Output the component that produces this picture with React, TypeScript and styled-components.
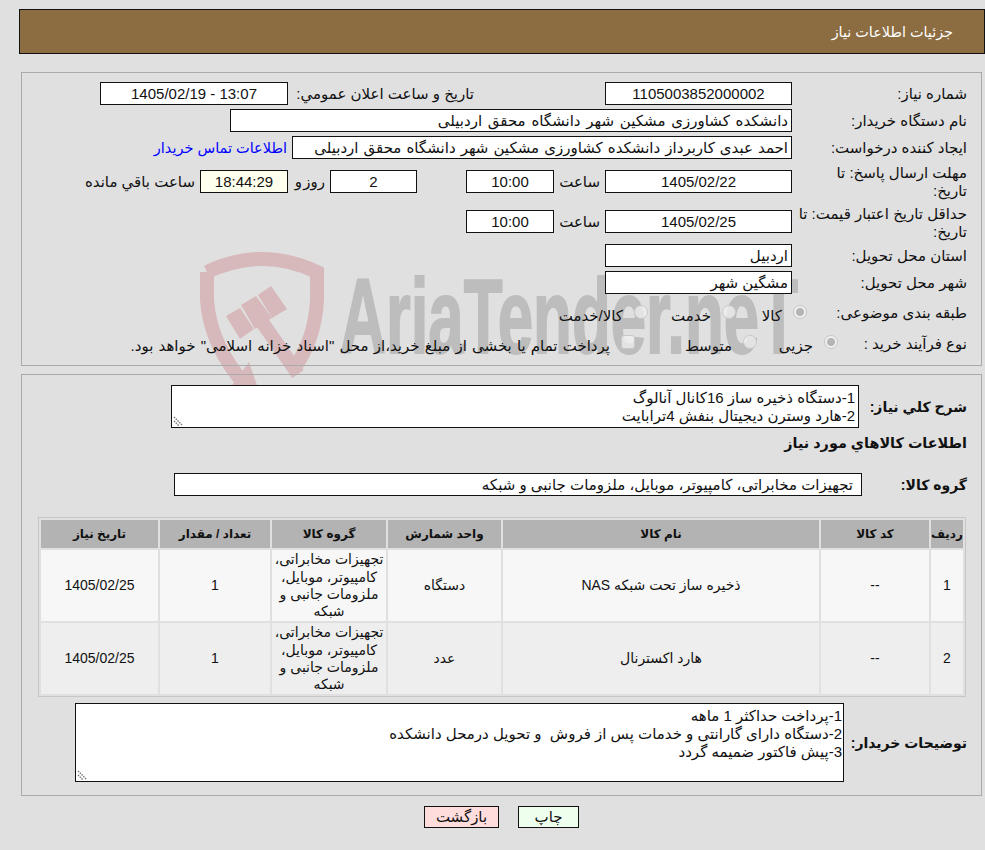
import React from 'react'
import styled, { createGlobalStyle } from 'styled-components'

const Global = createGlobalStyle`
  html, body {
    margin: 0;
    background: #e0e0e0;
  }
  * {
    box-sizing: border-box;
  }
`

const Page = styled.div`
  position: relative;
  isolation: isolate;
  width: 985px;
  height: 850px;
  overflow: hidden;
  padding-top: 9px;
  direction: rtl;
  color: #111;
  font-family: "Liberation Sans", "DejaVu Sans", sans-serif;
  font-size: 15px;
`

const Watermark = styled.svg`
  position: absolute;
  top: 0;
  left: 0;
  z-index: -1;
`

const Header = styled.div`
  height: 45px;
  margin-left: 19px;
  padding-right: 31px;
  display: flex;
  align-items: center;
  background: #8c6c41;
  border: 1px solid #111;
  color: #fff;
  font-size: 14.4px;
`

const Panel = styled.div<{ $top: number; $h: number; $pad: number }>`
  width: 961px;
  height: ${p => p.$h}px;
  margin: ${p => p.$top}px 3px 0 0;
  padding-top: ${p => p.$pad}px;
  padding-right: 14px;
  border: 1px solid #aaa;
`

const Row = styled.div<{ $top?: number; $h?: number; $center?: boolean }>`
  display: flex;
  align-items: ${p => (p.$center ? 'center' : 'flex-start')};
  height: ${p => p.$h ?? 23}px;
  margin-top: ${p => p.$top ?? 4}px;
`

const Label = styled.div<{ $w: number; $top?: number }>`
  flex: none;
  width: ${p => p.$w}px;
  margin-top: ${p => p.$top ?? 3}px;
  line-height: 18px;
`

const BoldLabel = styled.div<{ $w: number }>`
  flex: none;
  width: ${p => p.$w}px;
  font-size: 14px;
  font-weight: 700;
  line-height: 18px;
  white-space: nowrap;
`

const Field = styled.div<{ $w: number; $center?: boolean; $bg?: string; $word?: number; $pad?: number }>`
  flex: none;
  width: ${p => p.$w}px;
  height: 23px;
  padding: 0 ${p => p.$pad ?? 3}px 0 3px;
  background: ${p => p.$bg ?? '#fff'};
  border: 1px solid #111;
  line-height: 21px;
  text-align: ${p => (p.$center ? 'center' : 'right')};
  word-spacing: ${p => p.$word ?? 0}px;
  white-space: nowrap;
  overflow: hidden;
`

const Text = styled.span<{ $w?: number; $right?: number; $word?: number }>`
  flex: none;
  width: ${p => (p.$w ? `${p.$w}px` : 'auto')};
  margin-right: ${p => p.$right ?? 0}px;
  line-height: 23px;
  word-spacing: ${p => p.$word ?? 0}px;
  white-space: nowrap;
`

const ContactLink = styled.a`
  margin-right: 5px;
  color: #00f;
  font-size: 14.5px;
  line-height: 25px;
  text-decoration: none;
  white-space: nowrap;
`

const RadioItem = styled.div<{ $w: number }>`
  flex: none;
  display: flex;
  align-items: center;
  gap: 11px;
  width: ${p => p.$w}px;
`

const OptionText = styled.span<{ $word?: number }>`
  padding-top: 7px;
  word-spacing: ${p => p.$word ?? 0}px;
  white-space: nowrap;
`

const Radio = styled.span<{ $on?: boolean; $square?: boolean }>`
  flex: none;
  width: 14px;
  height: 14px;
  border-radius: ${p => (p.$square ? '3px' : '50%')};
  border: 1px solid #c8c8c8;
  background: ${p => (p.$on
    ? 'radial-gradient(circle, #b4b4b4 0 3.5px, #efefef 4.5px)'
    : 'rgba(240, 240, 240, 0.75)')};
`

const Box = styled.div<{ $w: number; $h: number; $pad: number }>`
  position: relative;
  flex: none;
  width: ${p => p.$w}px;
  height: ${p => p.$h}px;
  padding: 3px ${p => p.$pad}px 0 0;
  background: #fff;
  border: 1px solid #111;
  line-height: 18px;
  white-space: pre-wrap;
  overflow: hidden;
`

const Grip = styled.svg`
  position: absolute;
  left: 1px;
  bottom: 1px;
`

const Title = styled.div`
  margin-top: 5px;
  height: 20px;
  font-size: 14.4px;
  font-weight: 700;
  line-height: 20px;
`

const Table = styled.table`
  width: 928px;
  margin: 21px 1px 0 0;
  table-layout: fixed;
  border-collapse: separate;
  border-spacing: 2px;
  border: 1px solid #c6c6c6;
`

const Th = styled.th<{ $w: number }>`
  width: ${p => p.$w}px;
  height: 28px;
  padding: 0;
  background: #b3b3b3;
  font-size: 12px;
  font-weight: 700;
`

const Td = styled.td<{ $alt?: boolean }>`
  height: 71px;
  padding: 1px 0 0;
  background: ${p => (p.$alt ? '#eeeeee' : '#f7f7f7')};
  font-size: 14px;
  line-height: 17.3px;
  text-align: center;
`

const Buttons = styled.div`
  display: flex;
  justify-content: center;
  gap: 19px;
  margin-top: 10px;
  padding-left: 18px;
`

const Button = styled.button<{ $bg: string; $w: number }>`
  width: ${p => p.$w}px;
  height: 22px;
  padding: 0;
  background: ${p => p.$bg};
  border: 1px solid #111;
  color: #111;
  font: inherit;
  line-height: 20px;
`

const columns = [
  { title: 'ردیف', w: 32 },
  { title: 'کد کالا', w: 108 },
  { title: 'نام کالا', w: 316 },
  { title: 'واحد شمارش', w: 113 },
  { title: 'گروه کالا', w: 114 },
  { title: 'تعداد / مقدار', w: 110 },
  { title: 'تاریخ نیاز', w: 117 },
]

const group = 'تجهیزات مخابراتی، کامپیوتر، موبایل، ملزومات جانبی و شبکه'

const items = [
  { row: '1', name: 'ذخیره ساز تحت شبکه NAS', unit: 'دستگاه' },
  { row: '2', name: 'هارد اکسترنال', unit: 'عدد' },
]

const GripIcon = () => (
  <Grip width="11" height="11" viewBox="0 0 11 11">
    <path d="M1 2l8 8M1 6l5 5" stroke="#777" strokeWidth="1.4" strokeDasharray="1.5 1" fill="none" />
  </Grip>
)

const App: React.FC = () => (
  <Page>
    <Global />
    <Watermark width="985" height="850" viewBox="0 0 985 850">
      <g fill="none" stroke="#d8b9bb" strokeWidth="14">
        <path d="M207 272 Q262 246 317 272 L317 300 Q315 340 293 370" />
        <path d="M207 272 L207 300 Q210 345 246 386" />
        <path d="M262 322 L298 374" />
      </g>
      <g fill="#d8b9bb">
        <polygon points="226,316 240,308 254,329 240,339" />
        <polygon points="241,305 256,296 272,318 255,329" />
        <polygon points="258,295 271,286 287,309 272,318" />
        <polygon points="249,362 258,388 230,388" />
      </g>
      <text
        x="340"
        y="353"
        direction="ltr"
        fill="#bdbdbd"
        stroke="#bdbdbd"
        strokeWidth="2"
        fontFamily="Liberation Sans"
        fontSize="105"
        fontWeight="700"
        textLength="458"
        lengthAdjust="spacingAndGlyphs"
      >
        AriaTender.neT
      </text>
    </Watermark>

    <Header>جزئیات اطلاعات نیاز</Header>

    <Panel $top={18} $h={294} $pad={9}>
      <Row $top={0}>
        <Label $w={175}>شماره نیاز:</Label>
        <Field $w={187} $center>1105003852000002</Field>
        <Text $w={317}>
          <Text $right={131}>تاریخ و ساعت اعلان عمومي:</Text>
        </Text>
        <Field $w={188} $center>13:07 - 1405/02/19</Field>
      </Row>
      <Row>
        <Label $w={175}>نام دستگاه خریدار:</Label>
        <Field $w={562} $word={1.6}>دانشکده کشاورزی مشکین شهر دانشگاه محقق اردبیلی</Field>
      </Row>
      <Row>
        <Label $w={175}>ایجاد کننده درخواست:</Label>
        <Field $w={500} $word={0.9}>احمد عبدی کاربرداز دانشکده کشاورزی مشکین شهر دانشگاه محقق اردبیلی</Field>
        <ContactLink href="#">اطلاعات تماس خریدار</ContactLink>
      </Row>
      <Row $top={11} $h={36}>
        <Label $w={175} $top={-6}>مهلت ارسال پاسخ: تا<br />تاریخ:</Label>
        <Field $w={187} $center>1405/02/22</Field>
        <Text $w={46} $right={5}>ساعت</Text>
        <Field $w={88} $center>10:00</Field>
        <Text $w={49} />
        <Field $w={87} $center>2</Field>
        <Text $w={37} $right={5} $word={-3}>روز و</Text>
        <Field $w={88} $center $bg="#ffffee">18:44:29</Field>
        <Text $right={5}>ساعت باقي مانده</Text>
      </Row>
      <Row $h={30}>
        <Label $w={175} $top={-5}>حداقل تاریخ اعتبار قیمت: تا<br />تاریخ:</Label>
        <Field $w={187} $center>1405/02/25</Field>
        <Text $w={46} $right={5}>ساعت</Text>
        <Field $w={88} $center>10:00</Field>
      </Row>
      <Row>
        <Label $w={175}>استان محل تحویل:</Label>
        <Field $w={187}>اردبیل</Field>
      </Row>
      <Row>
        <Label $w={175}>شهر محل تحویل:</Label>
        <Field $w={187}>مشگین شهر</Field>
      </Row>
      <Row $top={6} $h={24} $center>
        <Label $w={160} $top={2}>طبقه بندی موضوعی:</Label>
        <RadioItem $w={71}><Radio $on /><OptionText>کالا</OptionText></RadioItem>
        <RadioItem $w={88}><Radio /><OptionText>خدمت</OptionText></RadioItem>
        <RadioItem $w={120}><Radio /><OptionText>کالا/خدمت</OptionText></RadioItem>
      </Row>
      <Row $top={6} $h={24} $center>
        <Label $w={129} $top={4}>نوع فرآیند خرید :</Label>
        <RadioItem $w={81}><Radio $on /><OptionText>جزیی</OptionText></RadioItem>
        <RadioItem $w={122}><Radio /><OptionText>متوسط</OptionText></RadioItem>
        <RadioItem $w={520}><Radio $square /><OptionText $word={1}>پرداخت تمام یا بخشی از مبلغ خرید،از محل "اسناد خزانه اسلامی" خواهد بود.</OptionText></RadioItem>
      </Row>
    </Panel>

    <Panel $top={8} $h={422} $pad={10}>
      <Row $top={0} $h={43} $center>
        <BoldLabel $w={108}>شرح كلي نياز:</BoldLabel>
        <Box $w={688} $h={43} $pad={3}>
          {'1-دستگاه ذخیره ساز 16کانال آنالوگ\n2-هارد وسترن دیجیتال بنفش 4ترابایت'}
          <GripIcon />
        </Box>
      </Row>
      <Title>اطلاعات كالاهاي مورد نياز</Title>
      <Row $top={20} $center>
        <BoldLabel $w={105}>گروه کالا:</BoldLabel>
        <Field $w={688} $pad={8}>{group}</Field>
      </Row>
      <Table>
        <thead>
          <tr>
            {columns.map(c => <Th key={c.title} $w={c.w}>{c.title}</Th>)}
          </tr>
        </thead>
        <tbody>
          {items.map((item, i) => (
            <tr key={item.row}>
              <Td $alt={i === 1}>{item.row}</Td>
              <Td $alt={i === 1}>--</Td>
              <Td $alt={i === 1}>{item.name}</Td>
              <Td $alt={i === 1}>{item.unit}</Td>
              <Td $alt={i === 1}>{group}</Td>
              <Td $alt={i === 1}>1</Td>
              <Td $alt={i === 1}>1405/02/25</Td>
            </tr>
          ))}
        </tbody>
      </Table>
      <Row $top={6} $h={79} $center>
        <BoldLabel $w={123}>توضیحات خریدار:</BoldLabel>
        <Box $w={769} $h={79} $pad={1}>
          {'1-پرداخت حداکثر 1 ماهه\n2-دستگاه دارای گارانتی و خدمات پس از فروش  و تحویل درمحل دانشکده\n3-پیش فاکتور ضمیمه گردد'}
          <GripIcon />
        </Box>
      </Row>
    </Panel>

    <Buttons>
      <Button $bg="#eeffee" $w={61}>چاپ</Button>
      <Button $bg="#ffdddd" $w={75}>بازگشت</Button>
    </Buttons>
  </Page>
)

export default App
